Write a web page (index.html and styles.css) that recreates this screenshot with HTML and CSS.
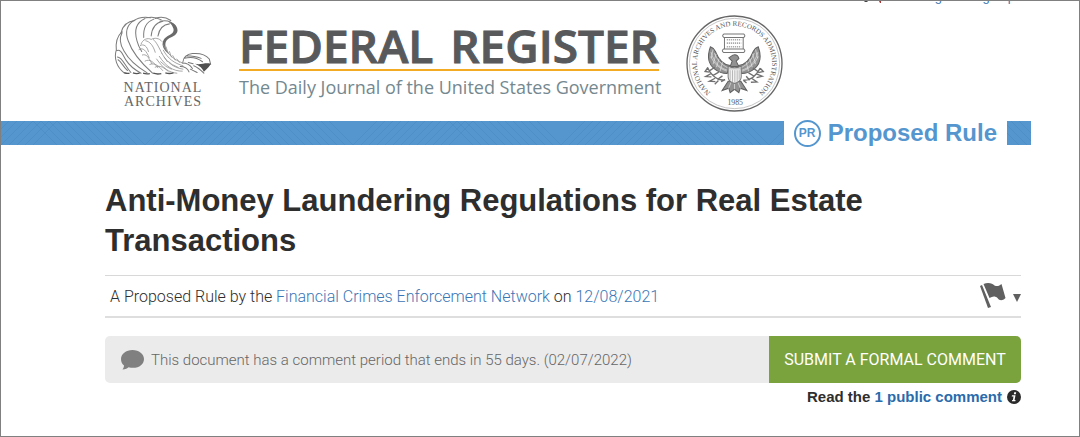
FILE: index.html
```
<!DOCTYPE html>
<html lang="en">
<head>
<meta charset="utf-8">
<meta name="viewport" content="width=device-width, initial-scale=1">
<title>Federal Register: Anti-Money Laundering Regulations for Real Estate Transactions</title>
<link rel="stylesheet" href="styles.css">
</head>
<body>
<div class="page">
  <nav class="account" aria-label="Account">
    <svg class="account-mark" viewBox="0 0 20 3" aria-hidden="true"><path d="M1 0h4l-1 1H2z" fill="#444"/><path d="M16 0h2v2h-1z" fill="#a33"/></svg>
    <a href="#signin">Sign in</a>
    <a href="#signup">Sign up</a>
  </nav>

  <header class="masthead">
    <a class="archives" href="#archives" aria-label="National Archives">
      <svg class="eagle" viewBox="42 36 290 180" aria-hidden="true">
        <g fill="none" stroke="#7c7c7c" stroke-width="3" stroke-linecap="round">
          <path d="M72 207C50 190 42 165 48 142M48 142c16-8 20 14 30 28 10 16 26 28 44 38"/>
          <path d="M49 141C46 116 52 98 66 85M66 88c-10 18-6 36 6 55 12 22 32 42 68 64"/>
          <path d="M63 88C68 66 84 54 104 52M98 54c-16 12-24 32-14 58 10 30 34 62 72 96"/>
          <path d="M96 55C112 44 130 40 150 44M134 46c-22 10-34 32-24 66 3 12 8 22 14 32"/>
          <path d="M138 44c16-4 30-2 44 6M160 48c-22 8-32 26-30 54"/>
          <path d="M164 46c14-6 32-4 46 6M186 54c-20 4-32 20-34 44"/>
          <path d="M178 54c18-4 34 0 44 14M206 62c-18 2-30 14-34 36"/>
          <path d="M52 160c14 0 20 22 40 46M54 168c10 6 14 20 28 32"/>
        </g>
        <path d="M204 56c14 2 26 12 26 26-2 12-12 16-20 20-10 4-16 10-16 22 0 10 4 18 12 28-12-8-22-20-20-34 2-12 10-18 22-24 8-4 14-12 8-22-2-6-6-10-12-16z" fill="#6a6a6a"/>
        <g fill="none" stroke="#929292" stroke-width="2.400" stroke-linecap="round">
          <path d="M122 122c4-14 20-20 30-14 10-6 24-4 32 6M120 126c10-6 20 2 24 18M136 112c12 2 22 14 28 34M158 108c10 8 16 22 26 42"/>
          <path d="M116 138c12-8 22 4 30 24M126 154c12-4 18 6 28 26M134 172c14-8 26 4 38 20M148 182c14-6 26 4 38 18M164 190c16-8 28 4 38 12"/>
          <path d="M188 124c12 28 30 44 58 54M188 140c14 26 32 38 58 46M184 150c16 28 36 42 62 46M176 158c20 30 40 44 68 44M168 166c20 28 36 40 60 42"/>
          <path d="M196 130l6 18M206 144l6 16M216 156l7 13M228 166l8 10M190 160l10 14M204 174l12 10M218 184l14 7M180 174l14 12M196 188l16 8"/>
        </g>
        <g fill="none" stroke="#777" stroke-width="3" stroke-linecap="round">
          <path d="M246 174c2-14 12-22 28-24 22-2 40 4 50 16l4 16M250 164c20-6 38-2 54 10M256 156c16 0 30 2 44 8M244 178c14 0 24 6 30 16M238 188c14 0 22 6 26 16M262 176l14 4M278 186c10 4 18 10 30 22M268 196l20 10"/>
        </g>
        <path d="M282 180c16 4 30-4 46 0-2 8-12 16-20 24-4-10-12-18-26-24z" fill="#4f4f4f"/>
        <path d="M72 206q8 4 16 2M98 207q10 4 20 1M128 208q10 3 20 1M158 208q12 4 24 1M194 207q12 4 24 0" fill="none" stroke="#555" stroke-width="4"/>
      </svg>
      <span class="archives-name">NATIONAL<br>ARCHIVES</span>
    </a>

    <a class="brand" href="#home">
      <span class="brand-name"><span>FEDERAL</span> <span>REGISTER</span></span>
      <span class="brand-tag">The Daily Journal of the United States Government</span>
    </a>

    <svg class="seal" viewBox="36 27 290 290" role="img" aria-label="National Archives and Records Administration, 1985">
      <defs>
        <path id="ring" d="M115 263.200A112.500 112.500 0 1 1 247 263.200"/>
      </defs>
      <circle cx="181" cy="172" r="142" fill="#fff" stroke="#666" stroke-width="4"/>
      <circle cx="181" cy="172" r="135" fill="none" stroke="#aaa" stroke-width="2"/>
      <text class="seal-ring"><textPath href="#ring" startOffset="50%" text-anchor="middle">NATIONAL ARCHIVES AND RECORDS ADMINISTRATION</textPath></text>
      <text class="seal-year" x="183" y="296" text-anchor="middle">1985</text>
      <g fill="#fff" stroke="#777" stroke-width="3">
        <path d="M151 91h56v39h-56z"/>
        <path d="M149 84h60q6 5 0 10h-60q-7-5 0-10zM148 129h61q6 5 0 10h-61q-7-5 0-10z"/>
      </g>
      <g stroke="#999" stroke-width="5" stroke-dasharray="3 3" fill="none"><path d="M158 101h43M158 111h43M158 122h43"/></g>
      <g fill="#929292" stroke="#5f5f5f" stroke-width="3">
        <path d="M109 122c-10 28-6 52 12 66 12 10 26 14 38 14l9-24c-20-2-34-16-44-42-4-8-8-12-15-14z"/>
        <path d="M252 122c10 28 6 52-12 66-12 10-26 14-38 14l-9-24c20-2 34-16 44-42 4-8 8-12 15-14z"/>
        <path d="M164 155l12-8q14-4 18 10l-8 8 8 16h-26l6-16z"/>
        <path d="M162 225l-18 28 20-7 4 13 13-10 13 10 4-13 20 7-18-28z"/>
      </g>
      <g fill="none" stroke="#e7e7e7" stroke-width="2">
        <path d="M111 138c8 28 22 46 48 54M110 151c10 22 26 36 48 44M121 141c8 20 20 34 40 44M251 138c-8 28-22 46-48 54M252 151c-10 22-26 36-48 44M240 141c-8 20-20 34-40 44M117 130l-6 26M126 143l-9 31M135 157l-8 26M145 168l-7 27M244 130l6 26M235 143l9 31M226 157l8 26M216 168l7 27M171 228l-8 19M181 228v21M191 228l8 19"/>
      </g>
      <path d="M162 180q19 9 39 0v32q0 13-20 20-19-7-19-20z" fill="#f4f4f4" stroke="#777" stroke-width="3"/>
      <path d="M162 188h38M168 192v30M175 192v36M182 192v38M189 192v36M195 192v28" stroke="#999" stroke-width="2"/>
      <g fill="none" stroke="#707070" stroke-width="4">
        <path d="M153 220c-20 6-40-10-53-37M153 220l-12 6M101 184l-8 12 13 2M106 194l16-11M111 202l-16 9 17 1M116 208l18-10M123 216l-17 9 18 1M130 220l15-11M133 223l-11 11"/>
        <path d="M207 222c22 2 39-14 51-36M207 222l10 8M258 186l9 10-15 3M251 196l-15-11M246 203l18 7-17 4M240 210l-17-10M233 217l15 10-18 1M226 222l-10-12"/>
      </g>
    </svg>
  </header>

  <div class="band">
    <svg class="stripe stripe-long" aria-hidden="true">
      <defs>
        <pattern id="hatch" width="208" height="24" patternUnits="userSpaceOnUse">
          <path d="M-24 24l24-24m-16 24l24-24m-16 24l24-24m-16 24l24-24m-16 24l24-24m-16 24l24-24m-16 24l24-24m-16 24l24-24M144 24l24-24m-16 24l24-24m-16 24l24-24m-16 24l24-24m-16 24l24-24m-16 24l24-24m-16 24l24-24m-16 24l24-24M32 0l24 24m-16-24l24 24m-16-24l24 24m-16-24l24 24m-16-24l24 24m-16-24l24 24m-16-24l24 24m-16-24l24 24m-16-24l24 24m-16-24l24 24m-16-24l24 24m-16-24l24 24" fill="none" stroke="#4f8fc7" stroke-width="1"/>
        </pattern>
      </defs>
      <rect width="100%" height="100%" fill="url(#hatch)"/>
    </svg>
    <div class="kind"><span class="kind-badge">PR</span>Proposed Rule</div>
    <svg class="stripe stripe-end" aria-hidden="true"><path d="M-4 0l24 24M4 0l24 24M12 0l24 24M-12 0l24 24" fill="none" stroke="#4f8fc7"/></svg>
  </div>

  <main class="document">
    <h1 class="title">Anti-Money Laundering Regulations for Real Estate Transactions</h1>

    <div class="byline">
      <p class="byline-text">A Proposed Rule by the <a href="#agency">Financial Crimes Enforcement Network</a> on <a href="#date">12/08/2021</a></p>
      <button class="flag" type="button" aria-label="Document options">
        <svg class="flag-icon" viewBox="0 0 26 26" aria-hidden="true"><path d="M0 3l2-1 9 22-3 1z"/><path d="M3.500 1c5-2 9-.5 11 1.500 3 1.500 5 0 7-1.500l4 14c-3 3-6 3-8 0-2-2-5-2-8 0z"/></svg>
        <svg class="caret" viewBox="0 0 8 8" aria-hidden="true"><path d="M0 0h8L4 8z"/></svg>
      </button>
    </div>

    <div class="comment-bar">
      <p class="comment-note">
        <svg class="bubble" viewBox="0 0 23 20" aria-hidden="true"><path d="M11.500 0C5 0 0 4 0 9c0 3 1 5 3 6.500 0 2-1 3-1.500 4 3 0 5-1 6-2.200 9 2 15.500-2 15.500-8.300 0-5-5-9-11.500-9z"/></svg>
        This document has a comment period that ends in 55 days. (02/07/2022)
      </p>
      <button class="submit" type="button">SUBMIT A FORMAL COMMENT</button>
    </div>

    <p class="read"><span>Read the <a href="#comments">1 public comment</a></span>
      <svg class="info" viewBox="0 0 14 14" aria-hidden="true"><circle cx="7" cy="7" r="7" fill="#2b2b2b"/><path d="M7.200 2.200h2l-.4 2h-2zM5 5.200h3.500L7.600 10h1l-.3 1.300H4.900L5.200 10h.7l.6-3.500H4.700z" fill="#fff"/></svg>
    </p>
  </main>
</div>
</body>
</html>
```
FILE: styles.css
```
* { box-sizing: border-box; }
body {
  margin: 0;
  background: #fff;
  color: #2e2e2e;
  font-family: "Liberation Sans", Arial, sans-serif;
}
a { color: #3a76b5; text-decoration: none; }
p, h1 { margin: 0; }
button { font: inherit; border: 0; cursor: pointer; }

.page { min-height: 100vh; border: 1px solid #808080; }

.account {
  display: flex;
  align-items: flex-end;
  justify-content: flex-end;
  gap: 8px;
  height: 3px;
  padding-right: 64px;
  overflow: hidden;
  font-size: 13px;
  line-height: 14px;
}
.account-mark { width: 20px; height: 3px; margin-right: 32px; }

.masthead {
  display: flex;
  align-items: flex-start;
  padding: 11px 0 8px 113px;
}
.archives { display: block; width: 98px; color: #666; text-align: center; }
.eagle { display: block; width: 98px; height: 61px; }
.archives-name {
  display: block;
  margin-top: 5px;
  font-family: "Liberation Serif", "Times New Roman", serif;
  font-size: 14px;
  line-height: 14px;
  letter-spacing: 1px;
}
.brand { display: block; width: 420px; margin: 6px 0 0 27px; }
.brand-name {
  display: flex;
  justify-content: space-between;
  border-bottom: 2px solid #f3ab23;
  color: #58595b;
  font-family: "Open Sans", "Noto Sans", sans-serif;
  font-size: 46px;
  font-weight: 600;
  line-height: 48px;
  -webkit-text-stroke: 1px #58595b;
}
.brand-tag {
  display: block;
  margin-top: 4px;
  color: #748890;
  font-family: "Open Sans", sans-serif;
  font-size: 18px;
  line-height: 24px;
  white-space: nowrap;
}
.seal { width: 97px; height: 97px; margin-left: 27px; }
.seal-ring, .seal-year { fill: #555; font-family: "Liberation Serif", serif; }
.seal-ring { font-size: 21px; }
.seal-year { font-size: 23px; }

.band { display: flex; align-items: center; height: 26px; padding-right: 48px; }
.stripe { height: 24px; background: #5596cf; }
.stripe-long { flex: 1; min-width: 0; }
.stripe-end { width: 24px; }
.kind {
  display: flex;
  align-items: center;
  gap: 7px;
  padding: 0 10px;
  color: #5596cf;
  font-size: 24px;
  font-weight: 700;
  line-height: 26px;
}
.kind-badge {
  width: 27px;
  height: 27px;
  border: 2px solid #5596cf;
  border-radius: 50%;
  font-size: 12px;
  line-height: 23px;
  text-align: center;
}

.document { padding: 35px 58px 0 104px; }
.title { font-size: 31px; line-height: 40px; }

.byline {
  display: flex;
  align-items: center;
  justify-content: space-between;
  height: 43px;
  margin-top: 14px;
  padding-left: 5px;
  border-top: 1px solid #d8d8d8;
  border-bottom: 2px solid #dedede;
}
.byline-text { font-family: Roboto, sans-serif; font-size: 16px; font-weight: 300; }
.flag { display: flex; align-items: center; gap: 7px; padding: 0; background: none; fill: #606060; }
.flag-icon { width: 26px; height: 26px; }
.caret { width: 8px; height: 8px; margin-top: 3px; }

.comment-bar {
  display: flex;
  height: 47px;
  margin-top: 18px;
  border-radius: 5px;
  background: #ebebeb;
  overflow: hidden;
}
.comment-note {
  display: flex;
  flex: 1;
  align-items: center;
  gap: 7px;
  padding-left: 16px;
  color: #666;
  font-family: Roboto, sans-serif;
  font-size: 15px;
  font-weight: 300;
}
.bubble { width: 23px; height: 20px; fill: #808080; }
.submit { width: 252px; padding: 0; background: #7aa23d; color: #fff; font-family: Roboto, sans-serif; font-size: 16px; }
.read {
  display: flex;
  align-items: center;
  justify-content: flex-end;
  gap: 5px;
  margin-top: 4px;
  font-size: 15px;
  font-weight: 700;
  line-height: 20px;
}
.read a { color: #2a6bab; }
.info { width: 14px; height: 14px; }
```
